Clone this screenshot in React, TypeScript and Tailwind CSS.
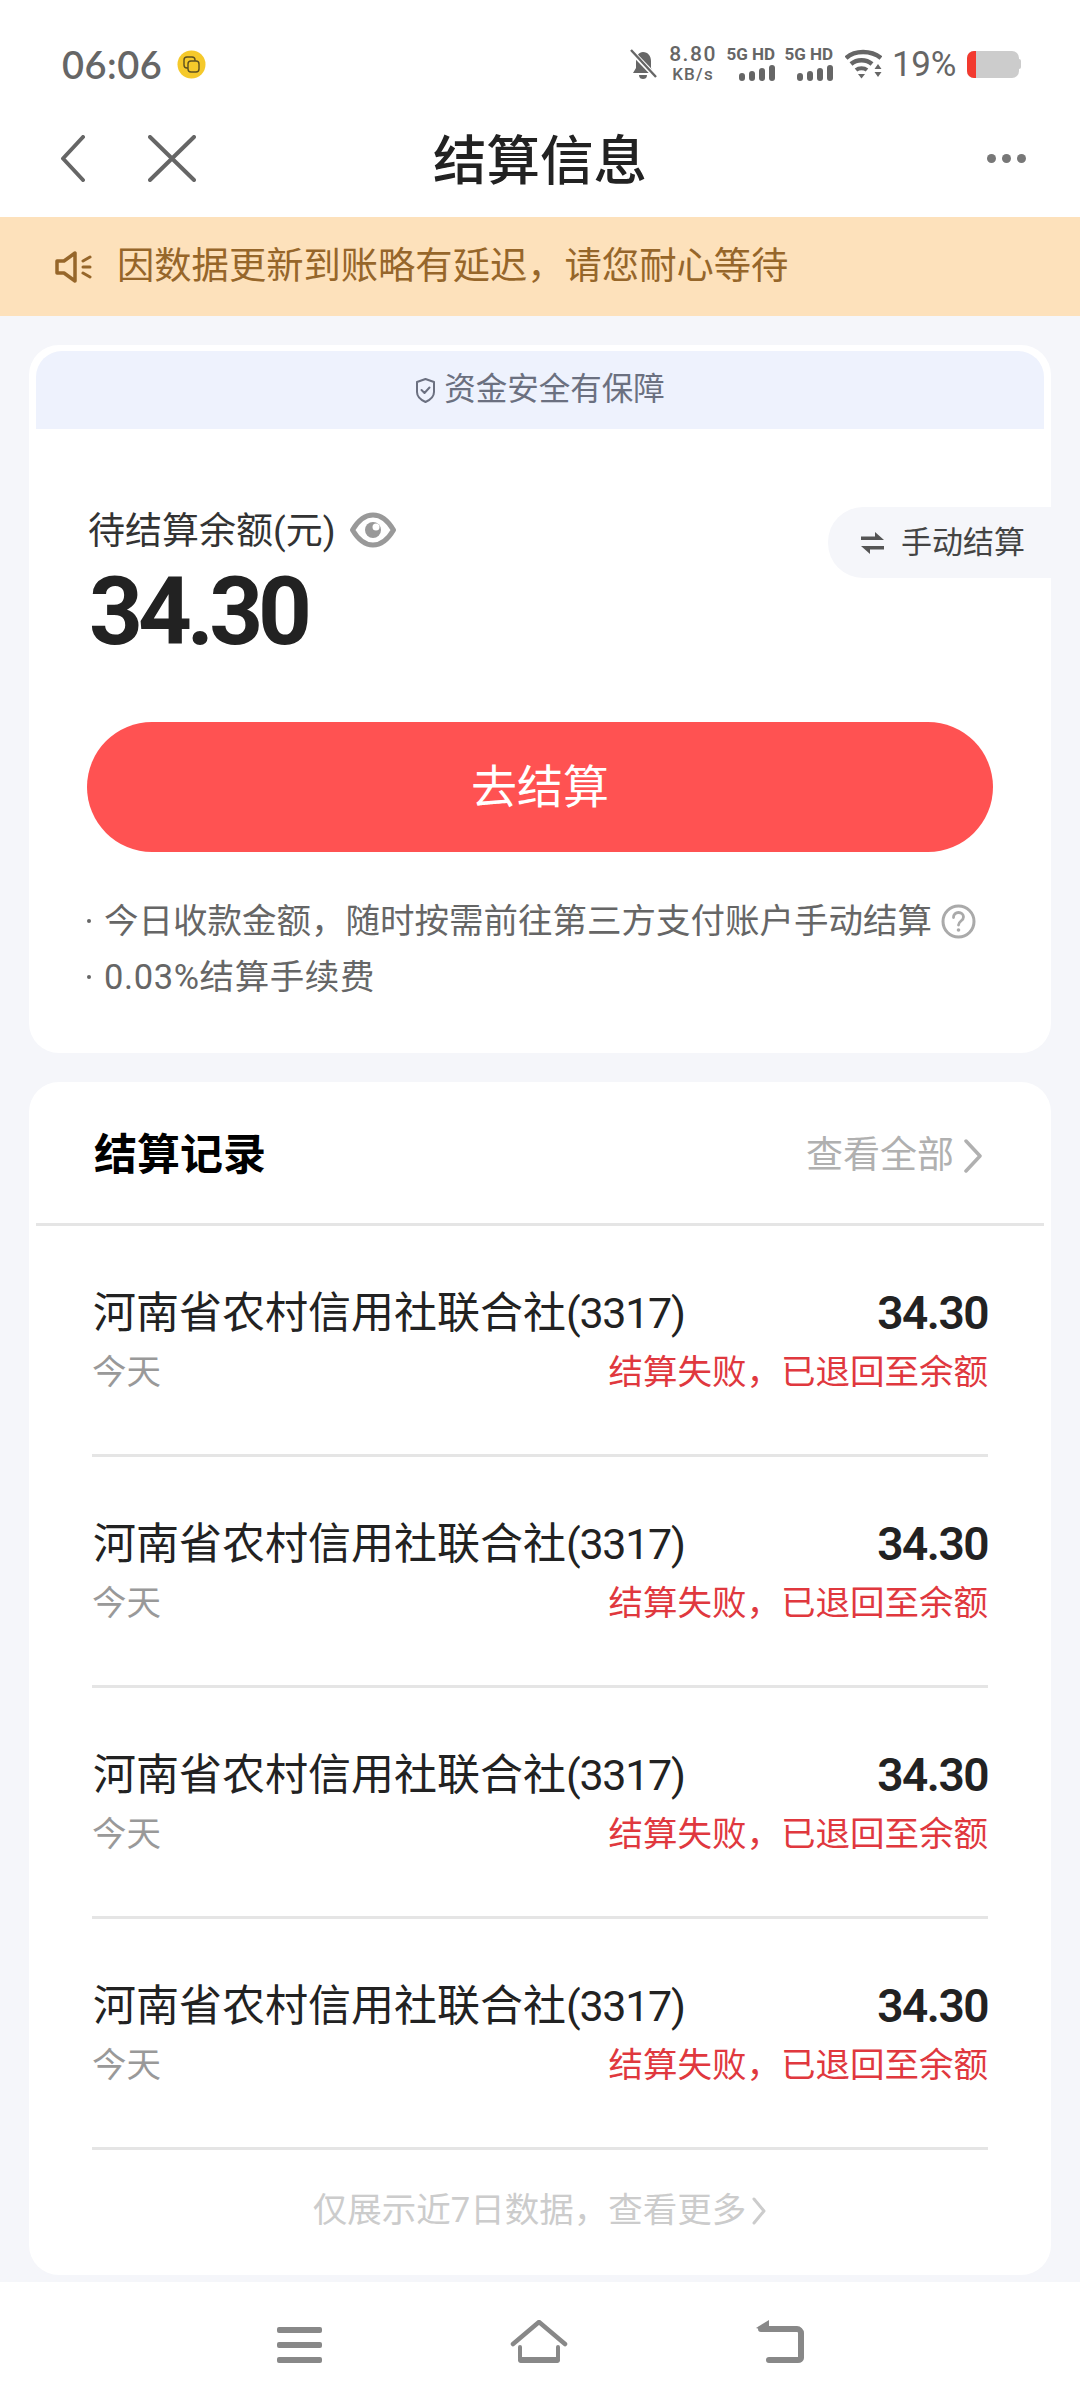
const FONT = { fontFamily: 'Roboto, "Noto Sans CJK SC", sans-serif' };

const records = [0, 1, 2, 3];

function SignalBlock() {
  return (
    <div className="flex w-[48px] flex-col items-end gap-[4px]">
      <span className="text-[17px] leading-[14px] font-bold whitespace-nowrap text-[#666]">5G HD</span>
      <svg width="36" height="16" viewBox="0 0 36 16" fill="#666">
        <rect x="0" y="8" width="6" height="8" rx="3" />
        <rect x="10" y="6" width="6" height="10" rx="3" />
        <rect x="20" y="3" width="6" height="13" rx="3" />
        <rect x="30" y="0" width="6" height="16" rx="3" />
      </svg>
    </div>
  );
}

function StatusBar() {
  return (
    <div className="flex h-[100px] items-center justify-between pt-[28px] pr-[59px] pl-[62px]">
      <div className="flex items-center gap-[15px]">
        <span className="text-[38px] leading-none font-semibold tracking-[0.5px] text-[#666]" style={{ fontFamily: "Lato, sans-serif" }}>06:06</span>
        <svg width="29" height="29" viewBox="0 0 29 29">
          <circle cx="14.5" cy="14.5" r="14" fill="#f5c92b" />
          <rect x="7" y="7" width="11" height="11" rx="3" fill="none" stroke="#5d5020" strokeWidth="1.4" />
          <rect x="11" y="11" width="11" height="11" rx="3" fill="#f5c92b" stroke="#5d5020" strokeWidth="1.4" />
        </svg>
      </div>
      <div className="flex items-center">
        <svg width="27" height="31" viewBox="0 0 27 31" fill="#666">
          <path d="M13 3c5 0 8 4 8 9v7l3 5H3l3-5v-7c0-5 3-9 7-9z" />
          <path d="M9 26h8c0 3-2 4-4 4s-4-1-4-4z" />
          <path d="M1 2l25 26" stroke="#fff" strokeWidth="5" />
          <path d="M1 1l25 27" stroke="#666" strokeWidth="2.4" />
        </svg>
        <div className="ml-[11px] flex w-[50px] flex-col items-center text-[#666]">
          <span className="text-[21px] leading-[21px] font-medium tracking-[1.500px]">8.80</span>
          <span className="text-[17px] leading-[19px] font-medium tracking-[1.200px]">KB/s</span>
        </div>
        <div className="ml-[9px]"><SignalBlock /></div>
        <div className="ml-[10px]"><SignalBlock /></div>
        <svg className="ml-[12px]" width="37" height="30" viewBox="0 0 37 30" fill="none" stroke="#666">
          <path d="M1 9c9-8 25-8 35 0" strokeWidth="4.5" />
          <path d="M6 15c6-5 15-5 21 0" strokeWidth="4.5" />
          <path d="M11 21c3-2.500 8-2.500 11 0" strokeWidth="4" />
          <path d="M13 25h7l-3.500 4.500z" fill="#666" stroke="none" />
          <path d="M33 15l3.500 5h-7zM29.500 23h7l-3.500 5z" fill="#666" stroke="none" />
        </svg>
        <span className="ml-[10px] w-[64px] text-[35px] leading-none tracking-[-0.3px] whitespace-nowrap text-[#666]">19%</span>
        <div className="ml-[11px] flex items-center">
          <div className="h-[27px] w-[52px] overflow-hidden rounded-[7px] bg-[#cccccc]">
            <div className="h-full w-[9px] bg-[#f23a2f]" />
          </div>
          <div className="h-[10px] w-[2px] rounded-r-[2px] bg-[#cccccc]" />
        </div>
      </div>
    </div>
  );
}

function Header() {
  return (
    <div className="grid h-[117px] grid-cols-[1fr_auto_1fr] items-center px-[54px]">
      <div className="ml-[6px] flex items-center gap-[62px]">
        <svg width="26" height="47" viewBox="0 0 26 47" fill="none" stroke="#666" strokeWidth="4" strokeLinecap="round" strokeLinejoin="round">
          <path d="M23 2L3 23.500L23 45" />
        </svg>
        <svg width="48" height="47" viewBox="0 0 48 47" fill="none" stroke="#666" strokeWidth="4" strokeLinecap="round">
          <path d="M2 2l44 43M46 2L2 45" />
        </svg>
      </div>
      <h1 className="pt-[7px] text-[53.500px] leading-none font-medium text-[#222]">结算信息</h1>
      <div className="flex justify-end gap-[6px]">
        <span className="h-[9px] w-[9px] rounded-full bg-[#777]" />
        <span className="h-[9px] w-[9px] rounded-full bg-[#777]" />
        <span className="h-[9px] w-[9px] rounded-full bg-[#777]" />
      </div>
    </div>
  );
}

function Notice() {
  return (
    <div className="flex h-[99px] items-center gap-[25px] bg-[#fde1bb] pl-[55px] text-[37.300px] leading-none text-[#96662a]">
      <svg width="37" height="32" viewBox="0 0 37 32" fill="none" stroke="#96662a" strokeLinejoin="round" strokeLinecap="round">
        <path d="M2 10h7L20 2v28L9 22H2z" strokeWidth="3.500" />
        <path d="M28 10l7-4M28 16h7M28 22l7 4" strokeWidth="3" />
      </svg>
      <span>因数据更新到账略有延迟，请您耐心等待</span>
    </div>
  );
}

function BalanceCard() {
  return (
    <section className="mx-[29px] mt-[29px] rounded-[30px] bg-white">
      <div className="px-[7px] pt-[6px]">
        <div className="flex h-[78px] items-center justify-center gap-[8px] rounded-t-[26px] bg-[#eef2fd] text-[31.500px] leading-none text-[#6b7080]">
          <svg width="21" height="27" viewBox="0 0 21 27" fill="none" stroke="#6b7080" strokeWidth="2" strokeLinejoin="round" strokeLinecap="round">
            <path d="M10.500 2l8.500 3v10c0 5-4 8-8.500 10C6 23 2 20 2 15V5z" />
            <path d="M6.500 13l3 3 5-5.500" />
          </svg>
          <span>资金安全有保障</span>
        </div>
      </div>
      <div className="flex items-start justify-between pt-[77px]">
        <div className="pl-[59px]">
          <div className="flex h-[48px] items-center gap-[14px]">
            <span className="pt-[2px] text-[37px] leading-none text-[#333]">待结算余额(元)</span>
            <svg width="46" height="36" viewBox="0 0 46 36" fill="none">
              <path d="M2.500 18C9 7 16 3 23 3s14 4 20.500 15C37 29 30 33 23 33S9 29 2.500 18z" stroke="#999" strokeWidth="5" strokeLinejoin="round" />
              <circle cx="23" cy="18" r="8" fill="#999" />
              <circle cx="26" cy="15" r="3.500" fill="#fff" />
            </svg>
          </div>
          <div className="mt-[10px] pl-[1px] text-[94px] leading-[96px] font-bold tracking-[-5px] text-[#222]">34.30</div>
        </div>
        <div className="mt-[1px] flex h-[71px] w-[223px] items-center gap-[17px] rounded-l-[35px] bg-[#f5f6fa] pl-[33px] text-[31px] leading-none whitespace-nowrap text-[#444]">
          <svg width="23" height="22" viewBox="0 0 23 22" fill="#555">
            <path d="M14 0l9 8H0V4.500h14zM9 22l-9-8h23v3.500H9z" />
          </svg>
          <span>手动结算</span>
        </div>
      </div>
      <div className="mx-[58px] mt-[62px] flex h-[130px] items-center justify-center rounded-full bg-[#ff5252] text-[46px] leading-none text-white">
        去结算
      </div>
      <ul className="mt-[41px] pr-[58px] pb-[48px] pl-[58px] text-[34.500px] leading-[56px] text-[#666]">
        <li className="flex h-[56px] items-center whitespace-nowrap">
          <span className="mr-[13px] h-[4px] w-[4px] rounded-full bg-[#666]" />
          <span>今日收款金额，随时按需前往第三方支付账户手动结算</span>
          <svg className="ml-[9px]" width="35" height="35" viewBox="0 0 35 35" fill="none">
            <circle cx="17.500" cy="17.500" r="15.500" stroke="#aaa" strokeWidth="3" />
            <path d="M12.500 13.500c0-3 2.200-5 5-5s5 2 5 4.500c0 4-5 4-5 8" stroke="#aaa" strokeWidth="2.800" strokeLinecap="round" />
            <circle cx="17.500" cy="26" r="1.800" fill="#aaa" />
          </svg>
        </li>
        <li className="flex h-[56px] items-center whitespace-nowrap">
          <span className="mr-[13px] h-[4px] w-[4px] rounded-full bg-[#666]" />
          <span className="tracking-[0.600px]">0.03%结算手续费</span>
        </li>
      </ul>
    </section>
  );
}

function RecordRow() {
  return (
    <div className="mx-[63px] h-[231px] border-b-[3px] border-[#e5e5e5] pt-[60px]">
      <div className="flex items-center justify-between">
        <span className="pl-[1px] text-[43px] leading-[54px] text-[#222]">
          河南省农村信用社联合社<span className="tracking-[-1.300px]">(3317)</span>
        </span>
        <span className="text-[46px] leading-[54px] font-semibold tracking-[-1.500px] text-[#222]">34.30</span>
      </div>
      <div className="mt-[8px] flex items-center justify-between text-[34.500px] leading-[48px]">
        <span className="text-[#999]">今天</span>
        <span className="text-[#e0383e]">结算失败，已退回至余额</span>
      </div>
    </div>
  );
}

function RecordsCard() {
  return (
    <section className="mx-[29px] mt-[29px] rounded-[30px] bg-white">
      <div className="mx-[7px] flex h-[144px] items-center justify-between border-b-[3px] border-[#e5e5e5] pt-[6px] pr-[61px] pl-[58px]">
        <h2 className="text-[43px] leading-none font-bold text-black">结算记录</h2>
        <div className="flex items-center gap-[9px] text-[37px] leading-none text-[#b0b0b0]">
          <span>查看全部</span>
          <svg width="20" height="34" viewBox="0 0 20 34" fill="none" stroke="#b0b0b0" strokeWidth="3.500" strokeLinecap="round" strokeLinejoin="round">
            <path d="M3 2l14 15L3 32" />
          </svg>
        </div>
      </div>
      {records.map((i) => (
        <RecordRow key={i} />
      ))}
      <div className="flex h-[125px] items-center justify-center gap-[5px] pb-[4px] text-[34.500px] leading-none text-[#cccccc]">
        <span>仅展示近7日数据，查看更多</span>
        <svg width="16" height="28" viewBox="0 0 16 28" fill="none" stroke="#cccccc" strokeWidth="3" strokeLinecap="round" strokeLinejoin="round">
          <path d="M3 2l10 12L3 26" />
        </svg>
      </div>
    </section>
  );
}

function BottomNav() {
  return (
    <div className="mt-[7px] flex h-[126px] items-start gap-[188px] bg-white pt-[38px] pl-[277px]">
      <svg className="mt-[7px]" width="45" height="36" viewBox="0 0 45 36" fill="#888">
        <rect x="0" y="0" width="45" height="6" rx="2" />
        <rect x="0" y="15" width="45" height="6" rx="2" />
        <rect x="0" y="30" width="45" height="6" rx="2" />
      </svg>
      <svg width="58" height="44" viewBox="0 0 58 44" fill="none" stroke="#888" strokeLinecap="round" strokeLinejoin="round">
        <path d="M3 24L29 2l26 22" strokeWidth="4.500" />
        <path d="M10 27v11c0 2 1 3 3 3h32c2 0 3-1 3-3V27" strokeWidth="4" />
        <path d="M11 40h36" strokeWidth="6" />
      </svg>
      <svg width="48" height="43" viewBox="0 0 48 43" fill="none">
        <path d="M13 0L0 8l13 4z" fill="#888" />
        <path d="M5 9h36c2 0 4 2 4 4v25c0 1-1 2-3 2H13" stroke="#888" strokeWidth="6" strokeLinecap="round" />
      </svg>
    </div>
  );
}

export default function App() {
  return (
    <div className="h-[2408px] w-[1080px] overflow-hidden bg-[#f5f6fa]" style={FONT}>
      <div className="bg-white">
        <StatusBar />
        <Header />
      </div>
      <Notice />
      <BalanceCard />
      <RecordsCard />
      <BottomNav />
    </div>
  );
}
